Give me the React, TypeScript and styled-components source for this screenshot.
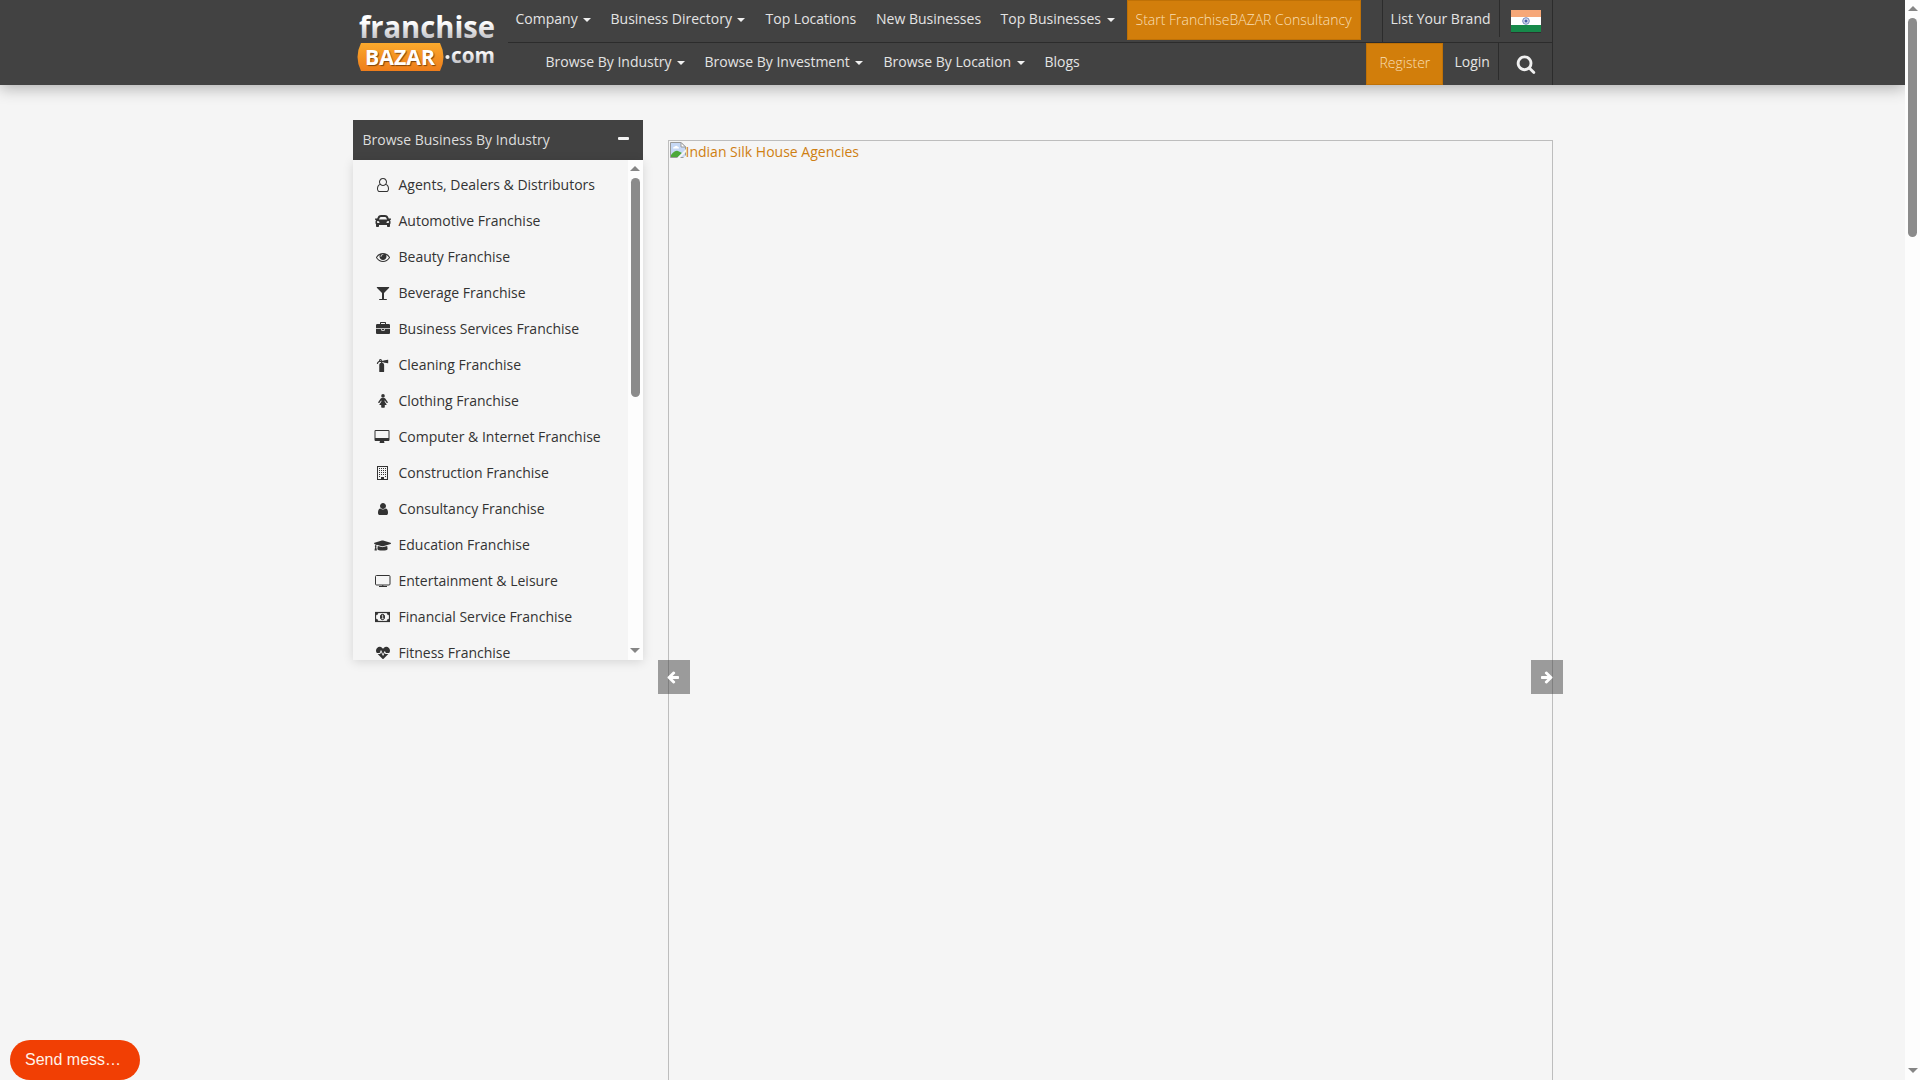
import React from 'react';
import styled, { createGlobalStyle } from 'styled-components';
import { FaCar, FaFireExtinguisher, FaGraduationCap, FaHeartbeat } from 'react-icons/fa';

const GlobalStyle = createGlobalStyle`
  * { box-sizing: border-box; }
  body { margin: 0; overflow: hidden; background: #f5f5f5; }
`;

const Page = styled.div`
  display: flex;
  height: 1080px;
  width: 1920px;
  overflow: hidden;
  font: 14px/20px 'Open Sans', 'Noto Sans', sans-serif;
  color: #333;
`;
const Content = styled.div`
  width: 1905px;
  height: 1080px;
  overflow: hidden;
  background: #f5f5f5;
`;
const Header = styled.header`
  display: flex;
  justify-content: center;
  height: 85px;
  background: #424242;
  box-shadow: 0 3px 15px rgba(0, 0, 0, 0.3);
`;
const HeaderInner = styled.div`
  display: flex;
  width: 1200px;
`;
const LogoLink = styled.a`
  display: block;
  width: 155px;
  height: 85px;
  flex: none;
`;
const Rows = styled.div`
  display: flex;
  flex: 1;
  flex-direction: column;
  border-right: 1px solid #2c2c2c;
`;
const NavRow = styled.div<{ $indent?: number; $divided?: boolean }>`
  display: flex;
  height: ${(p) => (p.$divided ? 43 : 42)}px;
  padding-left: ${(p) => p.$indent ?? 0}px;
  border-bottom: ${(p) => (p.$divided ? '1px solid #2c2c2c' : '0')};
`;
const NavItem = styled.a<{ $w: number; $pad?: number }>`
  display: flex;
  align-items: center;
  flex: none;
  width: ${(p) => p.$w}px;
  height: 38px;
  padding-left: ${(p) => p.$pad ?? 10}px;
  color: #e4e4e4;
  white-space: nowrap;
`;
const Caret = styled.span`
  margin: 2px 0 0 5.500px;
  border: 4px solid transparent;
  border-top-color: #f0f0f0;
  border-bottom: 0;
`;
const OrangeButton = styled.a<{ $w: number; $h: number; $pad: number }>`
  flex: none;
  width: ${(p) => p.$w}px;
  height: ${(p) => p.$h}px;
  padding: 9px 0 0 ${(p) => p.$pad - 1}px;
  border: 1px solid #bf7106;
  background: #d27e0b;
  color: #f9dfb5;
  font-weight: 300;
  line-height: 20px;
  white-space: nowrap;
`;
const Side = styled.div<{ $h: number; $w: number; $left?: boolean; $right?: boolean; $pad: number }>`
  display: flex;
  align-items: center;
  flex: none;
  width: ${(p) => p.$w}px;
  height: ${(p) => p.$h}px;
  padding-left: ${(p) => p.$pad}px;
  border-left: ${(p) => (p.$left ? '1px solid #2c2c2c' : '0')};
  border-right: ${(p) => (p.$right ? '1px solid #2c2c2c' : '0')};
  color: #e4e4e4;
  white-space: nowrap;
`;
const SideLabel = styled.span`
  padding-bottom: 4px;
`;
const FlagBox = styled.span`
  display: flex;
  padding-top: 5px;
`;
const Spacer = styled.div`
  flex: 1;
`;
const Main = styled.main`
  display: flex;
  width: 1200px;
  margin: 35px auto 0;
`;
const Sidebar = styled.aside`
  width: 290px;
  height: 540px;
  flex: none;
`;
const SidebarTitle = styled.div`
  display: flex;
  align-items: center;
  justify-content: space-between;
  height: 40px;
  padding: 0 14px 0 10px;
  background: #424242;
  color: #ddd;
`;
const MinusMark = styled.span`
  width: 11px;
  height: 3px;
  margin-bottom: 3px;
  border-radius: 1px;
  background: #f4f4f4;
`;
const SidebarBody = styled.div`
  display: flex;
  height: 500px;
  overflow: hidden;
  box-shadow: 0 2px 10px rgba(0, 0, 0, 0.13);
  background: #f5f5f5;
`;
const List = styled.ul`
  flex: 1;
  margin: 0;
  padding: 7px 0 0 21px;
  list-style: none;
`;
const Item = styled.li`
  display: flex;
  align-items: center;
  height: 36px;
  white-space: nowrap;
`;
const IconBox = styled.span`
  display: flex;
  justify-content: center;
  width: 18px;
  margin-right: 7px;
  svg { display: block; flex: none; }
`;
const Track = styled.div`
  display: flex;
  flex: none;
  flex-direction: column;
  align-items: center;
  width: 15px;
  height: 100%;
  background: #fdfdfd;
`;
const TrackArrow = styled.span<{ $down?: boolean; $gap: number }>`
  border: 5px solid transparent;
  ${(p) =>
    p.$down
      ? `border-top-color: #858585; border-bottom: 0; margin: auto 0 ${p.$gap}px;`
      : `border-bottom-color: #858585; border-top: 0; margin-top: ${p.$gap}px;`}
`;
const Thumb = styled.span<{ $h: number }>`
  width: 9px;
  height: ${(p) => p.$h}px;
  margin-top: 7px;
  border-radius: 5px;
  background: #8b8b8b;
`;
const Carousel = styled.section`
  position: relative;
  width: 885px;
  height: 945px;
  margin: 20px 0 0 25px;
  flex: none;
`;
const Slide = styled.a`
  display: flex;
  align-items: flex-start;
  width: 885px;
  height: 1100px;
  padding: 1px;
  border: 1px solid #bdbdbd;
  color: #cf7f12;
`;
const SlideArrow = styled.button<{ $side: 'left' | 'right' }>`
  position: absolute;
  top: 520px;
  ${(p) => (p.$side === 'left' ? 'left: -10px;' : 'right: -10px;')}
  display: flex;
  align-items: center;
  justify-content: center;
  width: 32px;
  height: 34px;
  padding: 0 ${(p) => (p.$side === 'left' ? '1px 0 0' : '0 0 0')};
  border: 0;
  background: rgba(66, 66, 66, 0.5);
`;
const SendButton = styled.div`
  position: fixed;
  left: 10px;
  bottom: 0;
  width: 130px;
  height: 40px;
  padding-left: 15px;
  border-radius: 20px;
  background: #f13f04;
  color: #fff2e8;
  font: 16px/39px 'Liberation Sans', Arial, sans-serif;
`;
const BadgeText = styled.text`
  text-shadow: 1px 1px 1px rgba(90, 45, 5, 0.75);
`;

const Glyph = ({ d, w = 1792, size = 14, fill = '#333', flip }: { d: string; w?: number; size?: number; fill?: string; flip?: boolean }) => (
  <svg width={(w / 1792) * size} height={size} viewBox={`0 0 ${w} 1792`} fill={fill} overflow="visible">
    <path d={d} transform={flip ? `translate(${w} 0) scale(-1 1)` : undefined} />
  </svg>
);

const paths = {
  search: 'M1216 832q0-185-131.5-316.5t-316.5-131.5-316.5 131.5-131.5 316.5 131.5 316.5 316.5 131.5 316.5-131.5 131.5-316.5zm512 832q0 52-38 90t-90 38q-54 0-90-38l-343-342q-179 124-399 124-143 0-273.5-55.5t-225-150-150-225-55.5-273.5 55.5-273.5 150-225 225-150 273.5-55.5 273.5 55.5 225 150 150 225 55.5 273.5q0 220-124 399l343 343q37 37 37 90z',
  glass: 'M1699 186q0 35-43 78l-632 632v768h320q26 0 45 19t19 45-19 45-45 19h-896q-26 0-45-19t-19-45 19-45 45-19h320v-768l-632-632q-43-43-43-78 0-23 18-36.5t38-17.5 43-4h1408q23 0 43 4t38 17.5 18 36.5z',
  userO: 'M1201 784q47 14 89.5 38t89 73 79.5 115.5 55 172 22 236.5q0 154-100 263.5t-241 109.5h-854q-141 0-241-109.5t-100-263.5q0-131 22-236.5t55-172 79.5-115.5 89-73 89.5-38q-79-125-79-272 0-104 40.5-198.5t109.5-163.5 163.5-109.5 198.5-40.5 198.5 40.5 163.5 109.5 109.5 163.5 40.5 198.5q0 147-79 272zm-433-656q-159 0-271.5 112.5t-112.5 271.5 112.5 271.5 271.5 112.5 271.5-112.5 112.5-271.5-112.5-271.5-271.5-112.5zm427 1536q88 0 150.5-71.5t62.5-173.5q0-239-78.5-377t-225.5-145q-145 127-336 127t-336-127q-147 7-225.5 145t-78.5 377q0 102 62.5 173.5t150.5 71.5h854z',
  arrow: 'M1664 896v128q0 53-32.5 90.5t-84.5 37.5h-704l293 294q38 36 38 90t-38 90l-75 76q-37 37-90 37-52 0-91-37l-651-652q-37-37-37-90 0-52 37-91l651-650q38-38 91-38 52 0 90 38l75 74q38 38 38 91t-38 91l-293 293h704q52 0 84.5 37.5t32.5 90.5z',
  user: 'M1536 1399q0 109-62.5 187t-150.5 78h-854q-88 0-150.5-78t-62.5-187q0-85 8.5-160.5t31.5-152 58.5-131 94-89 134.5-34.5q131 128 313 128t313-128q76 0 134.5 34.5t94 89 58.5 131 31.5 152 8.5 160.5zm-256-887q0 159-112.5 271.5t-271.5 112.5-271.5-112.5-112.5-271.5 112.5-271.5 271.5-112.5 271.5 112.5 112.5 271.5z',
  eye: 'M1664 960q-152-236-381-353 61 104 61 225 0 185-131.5 316.5t-316.5 131.5-316.5-131.5-131.5-316.5q0-121 61-225-229 117-381 353 133 205 333.5 326.5t434.5 121.5 434.5-121.5 333.5-326.5zm-720-384q0-20-14-34t-34-14q-125 0-214.5 89.5t-89.5 214.5q0 20 14 34t34 14 34-14 14-34q0-86 61-147t147-61q20 0 34-14t14-34zm848 384q0 34-20 69-140 230-376.5 368.5t-499.5 138.5-499.5-139-376.5-368q-20-35-20-69t20-69q140-229 376.5-368t499.5-139 499.5 139 376.5 368q20 35 20 69z',
  briefcase: 'M640 256h512v-128h-512v128zm1152 640v480q0 66-47 113t-113 47h-1472q-66 0-113-47t-47-113v-480h672v160q0 26 19 45t45 19h320q26 0 45-19t19-45v-160h672zm-768 0v128h-256v-128h256zm768-480v384h-1792v-384q0-66 47-113t113-47h352v-160q0-40 28-68t68-28h576q40 0 68 28t28 68v160h352q66 0 113 47t47 113z',
  desktop: 'M1728 992v-832q0-13-9.5-22.5t-22.5-9.5h-1600q-13 0-22.5 9.5t-9.5 22.5v832q0 13 9.5 22.5t22.5 9.5h1600q13 0 22.5-9.5t9.5-22.5zm128-832v1088q0 66-47 113t-113 47h-544q0 37 16 77.5t32 71 16 43.5q0 26-19 45t-45 19h-512q-26 0-45-19t-19-45q0-14 16-44t32-70 16-78h-544q-66 0-113-47t-47-113v-1088q0-66 47-113t113-47h1600q66 0 113 47t47 113z',
};

const Woman = () => (
  <svg width="10" height="14" viewBox="0 0 10 14" fill="#333">
    <circle cx="5" cy="1.900" r="1.800" />
    <path d="M3.600 4h2.800q.6 0 .9.500L9.700 8q.3.600-.2 1-.6.300-1-.2L6.900 6.400h-.3v1L8.600 10.500q.1.500-.4.500H6.800v2.100q0 .7-.7.700H3.900q-.7 0-.7-.7V11H1.800q-.5 0-.4-.5L3.400 7.400v-1h-.3L1.500 8.800q-.4.500-1 .2-.5-.4-.2-1L2.700 4.500q.3-.5.900-.5z" />
  </svg>
);
const Building = () => (
  <svg width="11" height="14" viewBox="0 0 11 14">
    <rect x=".5" y=".5" width="10" height="13" fill="none" stroke="#333" />
    {[2, 4, 6, 8].map((y) => [2, 4, 6, 8].map((x) => <rect key={`${x}-${y}`} x={x} y={y} width="1" height="1" fill="#333" />))}
    <path d="M2 10h1v1H2zM8 10h1v1H8zM4 11h3v2.5H4z" fill="#333" />
  </svg>
);
const Television = () => (
  <svg width="16" height="14" viewBox="0 0 16 14" fill="none" stroke="#333">
    <rect x=".5" y="1.5" width="14.5" height="9.5" rx="1" />
    <path d="M4 12.5h8M7.8 11v2" />
  </svg>
);
const Money = () => (
  <svg width="15" height="14" viewBox="0 0 15 14" fill="none" stroke="#333">
    <rect x=".5" y="2.5" width="14" height="9" strokeWidth="1.2" />
    <path d="M1 3h2a2 2 0 0 1-2 2zM14 3h-2a2 2 0 0 0 2 2zM1 11h2a2 2 0 0 0-2-2zM14 11h-2a2 2 0 0 1 2-2z" fill="#333" strokeWidth=".4" />
    <ellipse cx="7.5" cy="7" rx="2.1" ry="2.7" fill="#333" />
    <path d="M6.800 5.800l.9-.5v3.200M6.600 8.600h2" stroke="#f5f5f5" strokeWidth=".8" />
  </svg>
);

const industries: [string, React.ReactNode][] = [
  ['Agents, Dealers & Distributors', <Glyph d={paths.userO} w={1536} />],
  ['Automotive Franchise', <FaCar size={16} />],
  ['Beauty Franchise', <Glyph d={paths.eye} />],
  ['Beverage Franchise', <Glyph d={paths.glass} />],
  ['Business Services Franchise', <Glyph d={paths.briefcase} />],
  ['Cleaning Franchise', <FaFireExtinguisher size={13} />],
  ['Clothing Franchise', <Woman />],
  ['Computer & Internet Franchise', <Glyph d={paths.desktop} w={1856} />],
  ['Construction Franchise', <Building />],
  ['Consultancy Franchise', <Glyph d={paths.user} />],
  ['Education Franchise', <FaGraduationCap size={17} />],
  ['Entertainment & Leisure', <Television />],
  ['Financial Service Franchise', <Money />],
  ['Fitness Franchise', <FaHeartbeat size={14} />],
];

const Logo = () => (
  <svg width="155" height="85" viewBox="0 0 155 85" fontFamily="'Open Sans', 'Noto Sans', sans-serif" fontWeight="700">
    <defs>
      <linearGradient id="silver" x1="0" y1="0" x2="0" y2="1">
        <stop offset=".4" stopColor="#fff" />
        <stop offset=".8" stopColor="#c4c4c8" />
      </linearGradient>
      <linearGradient id="amber" x1="0" y1="0" x2="0" y2="1">
        <stop offset="0" stopColor="#fbaa2c" />
        <stop offset="1" stopColor="#ee7d1b" />
      </linearGradient>
    </defs>
    <text x="6" y="37.500" fontSize="30" textLength="136" lengthAdjust="spacingAndGlyphs" fill="url(#silver)">franchise</text>
    <path d="M8 43H87Q94 57 87 71H8Q1 57 8 43Z" fill="url(#amber)" />
    <BadgeText x="12" y="64.500" fontSize="21.500" textLength="70" lengthAdjust="spacingAndGlyphs" fill="#fff">BAZAR</BadgeText>
    <circle cx="94.500" cy="57" r="2.100" fill="#eee" />
    <text x="98" y="63" fontSize="22" textLength="44" lengthAdjust="spacingAndGlyphs" fill="url(#silver)">com</text>
  </svg>
);

const Flag = () => (
  <svg width="32" height="24" viewBox="0 0 32 24">
    <rect x="1" y="1" width="30" height="23" fill="#2f2f2f" />
    <path fill="#f6a778" d="M1 1h30v7H1z" />
    <path fill="#fff" d="M1 8h30v8H1z" />
    <path fill="#16894a" d="M1 16h30v7H1z" />
    <circle cx="16" cy="12" r="3.300" fill="#d8def0" stroke="#7386bd" />
    <circle cx="16" cy="12" r="1.500" fill="#4661a8" />
  </svg>
);

const BrokenImage = () => (
  <svg width="16" height="16" viewBox="0 0 16 16">
    <path d="M.5.5h10.500l4.500 4.500v10.500H.5z" fill="#c6d8f5" stroke="#9a9a9a" />
    <path d="M3 6.500q0-2 2-2 1-1.500 2.500 0 1.500 0 1.500 2z" fill="#fff" />
    <path d="M1 15v-2q4-5 7-4l4 2-4 4z" fill="#4da83a" />
    <path d="M11 .5V5h4.500z" fill="#fff" stroke="#9a9a9a" />
    <path d="M7 16l9-9v3l-6 6zM13 16l3-3v3z" fill="#f5f5f5" />
  </svg>
);

export default function App() {
  return (
    <Page>
      <GlobalStyle />
      <Content>
        <Header>
          <HeaderInner>
            <LogoLink><Logo /></LogoLink>
            <Rows>
              <NavRow $divided>
                <NavItem $w={93} $pad={8}>Company<Caret /></NavItem>
                <NavItem $w={155}>Business Directory<Caret /></NavItem>
                <NavItem $w={110.5}>Top Locations</NavItem>
                <NavItem $w={124.5}>New Businesses</NavItem>
                <NavItem $w={136}>Top Businesses<Caret /></NavItem>
                <OrangeButton $w={234} $h={40} $pad={9}>Start FranchiseBAZAR Consultancy</OrangeButton>
                <Spacer />
                <Side $h={42} $w={117} $left $pad={8}><SideLabel>List Your Brand</SideLabel></Side>
                <Side $h={37} $w={53} $left $pad={10}><FlagBox><Flag /></FlagBox></Side>
              </NavRow>
              <NavRow $indent={28}>
                <NavItem $w={159}>Browse By Industry<Caret /></NavItem>
                <NavItem $w={179}>Browse By Investment<Caret /></NavItem>
                <NavItem $w={161}>Browse By Location<Caret /></NavItem>
                <NavItem $w={60}>Blogs</NavItem>
                <Spacer />
                <OrangeButton $w={77} $h={42} $pad={14}>Register</OrangeButton>
                <Side $h={37} $w={56} $right $pad={12}>Login</Side>
                <Side $h={42} $w={53} $pad={17}><Glyph d={paths.search} size={20} fill="#f0f0f0" /></Side>
              </NavRow>
            </Rows>
          </HeaderInner>
        </Header>
        <Main>
          <Sidebar>
            <SidebarTitle>Browse Business By Industry<MinusMark /></SidebarTitle>
            <SidebarBody>
              <List>
                {industries.map(([name, icon]) => (
                  <Item key={name}><IconBox>{icon}</IconBox>{name}</Item>
                ))}
              </List>
              <Track>
                <TrackArrow $gap={6} />
                <Thumb $h={219} />
                <TrackArrow $down $gap={7} />
              </Track>
            </SidebarBody>
          </Sidebar>
          <Carousel>
            <Slide><BrokenImage />Indian Silk House Agencies</Slide>
            <SlideArrow $side="left"><Glyph d={paths.arrow} fill="#fff" /></SlideArrow>
            <SlideArrow $side="right"><Glyph d={paths.arrow} fill="#fff" flip /></SlideArrow>
          </Carousel>
        </Main>
      </Content>
      <Track>
        <TrackArrow $gap={6} />
        <Thumb $h={219} />
        <TrackArrow $down $gap={7} />
      </Track>
      <SendButton>Send mess…</SendButton>
    </Page>
  );
}
